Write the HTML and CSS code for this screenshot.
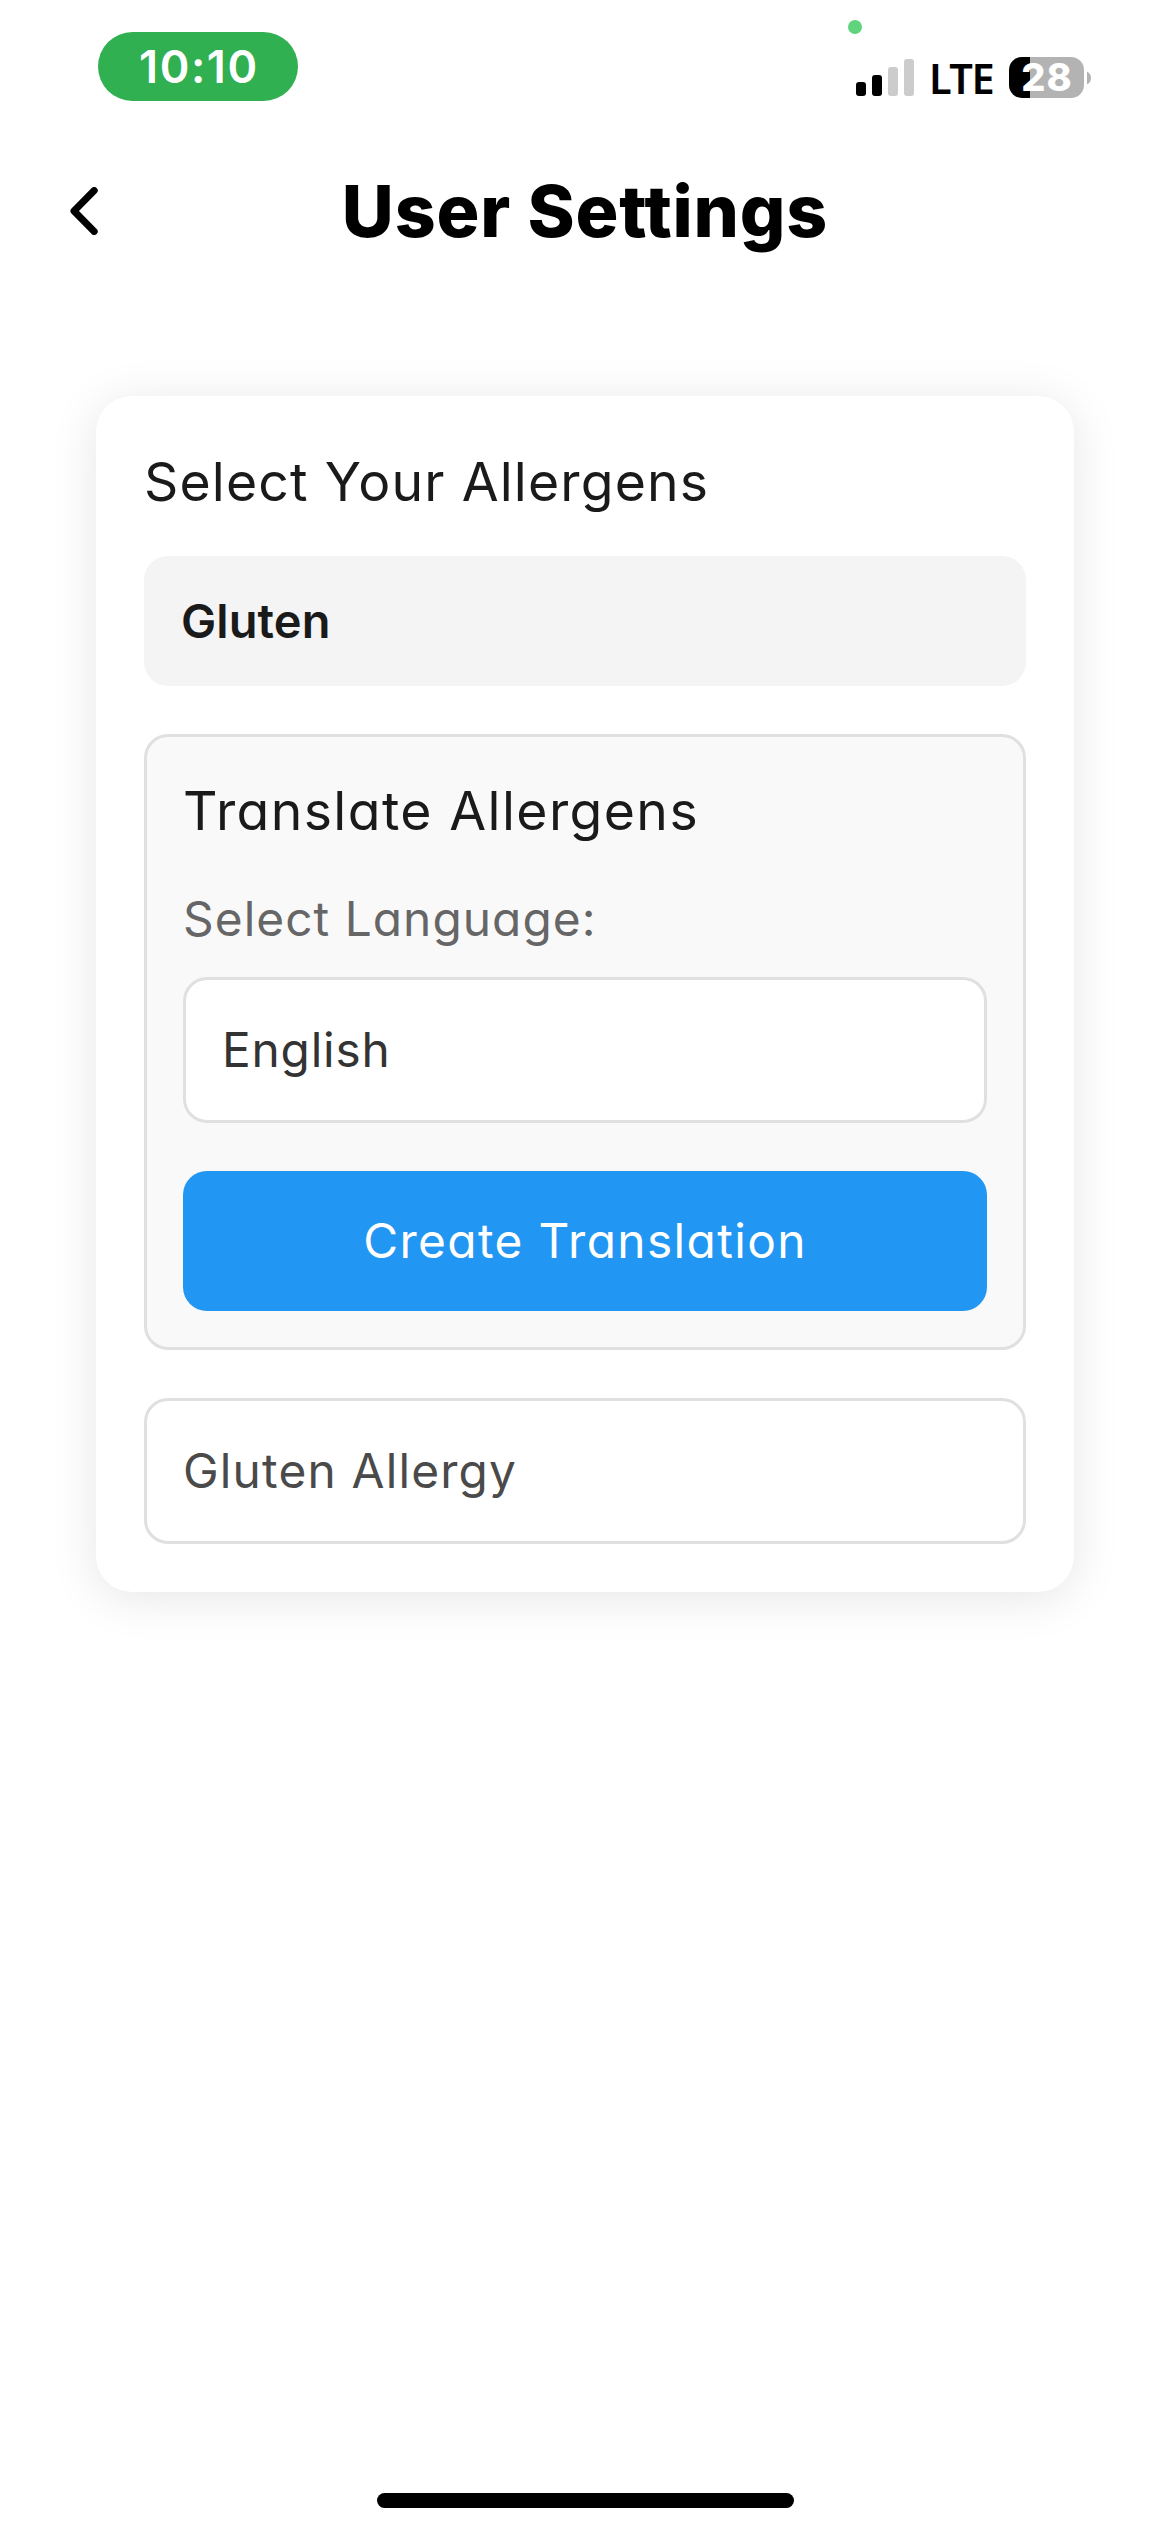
FILE: index.html
```html
<!DOCTYPE html>
<html lang="en">
<head>
<meta charset="utf-8">
<title>User Settings</title>
<link rel="stylesheet" href="styles.css">
</head>
<body>
<div class="screen">
  <div class="status-bar">
    <div class="time-pill">10:10</div>
    <div class="indicators">
      <span class="camera-dot"></span>
      <svg class="signal" width="58" height="37" viewBox="0 0 58 37">
        <rect x="0" y="23" width="10" height="14" rx="3"/>
        <rect x="16" y="16" width="10" height="21" rx="3"/>
        <rect x="32" y="8" width="10" height="29" rx="3" fill="#ccc"/>
        <rect x="48" y="0" width="10" height="37" rx="3" fill="#ccc"/>
      </svg>
      <span class="network">LTE</span>
      <div class="battery"><span class="battery-level">28</span></div>
      <svg class="battery-nub" width="4" height="14" viewBox="0 0 4 14"><path d="M0 0.5Q4 2.5 4 7T0 13.500Z" fill="#b3b3b3"/></svg>
    </div>
  </div>

  <header class="nav">
    <button class="back" aria-label="Back">
      <svg width="28" height="48" viewBox="0 0 28 48" fill="none" stroke="#000" stroke-width="7" stroke-linecap="round" stroke-linejoin="round"><path d="M24.200 3.500L4 24L24.200 44.500"/></svg>
    </button>
    <h1 class="title">User Settings</h1>
  </header>

  <main class="card">
    <h2 class="heading">Select Your Allergens</h2>
    <div class="allergen">Gluten</div>
    <section class="translate">
      <h2 class="heading heading-translate">Translate Allergens</h2>
      <div class="label">Select Language:</div>
      <div class="field language">English</div>
      <button class="create">Create Translation</button>
    </section>
    <div class="field result">Gluten Allergy</div>
  </main>

  <div class="home-indicator"></div>
</div>
</body>
</html>
```
FILE: styles.css
```css
* {
  box-sizing: border-box;
}

body {
  margin: 0;
  background: #fff;
  font-family: Inter, "Liberation Sans", sans-serif;
  font-feature-settings: "cv11";
}

.screen {
  display: flex;
  flex-direction: column;
  width: 1170px;
  height: 2532px;
  padding-bottom: 24px;
}

h1,
h2 {
  margin: 0;
  font-weight: 400;
}

button {
  padding: 0;
  border: 0;
  background: none;
  font-family: inherit;
  font-feature-settings: inherit;
}

/* Status bar */
.status-bar {
  display: flex;
  justify-content: space-between;
  height: 141px;
  padding: 32px 79px 0 98px;
}

.time-pill {
  width: 200px;
  height: 69px;
  padding-left: 41px;
  border-radius: 35px;
  background: #30b050;
  color: #fff;
  font-size: 45px;
  font-weight: 600;
  line-height: 70px;
  letter-spacing: 1.600px;
}

.indicators {
  position: relative;
  display: flex;
  align-items: flex-start;
  padding-top: 25px;
}

.camera-dot {
  position: absolute;
  top: -12px;
  left: -8px;
  width: 14px;
  height: 14px;
  border-radius: 50%;
  background: #5fd47c;
}

.signal {
  margin-top: 2px;
}

.network {
  width: 77px;
  margin-left: 15px;
  margin-right: 3px;
  font-family: "Noto Sans", "Open Sans", sans-serif;
  font-size: 41.500px;
  font-weight: 600;
  line-height: 43px;
  letter-spacing: -1.500px;
}

.battery {
  width: 75px;
  height: 41px;
  border-radius: 13px;
  background: linear-gradient(90deg, #000 21px, #b3b3b3 21px);
  color: #fff;
  text-align: center;
}

.battery-level {
  display: block;
  padding-left: 1px;
  font-size: 38px;
  font-weight: 800;
  line-height: 41px;
  letter-spacing: 1px;
}

.battery-nub {
  margin: 14px 0 0 3px;
}

/* Navigation header */
.nav {
  display: grid;
  grid-template-columns: 100px 1fr 100px;
  align-items: center;
  height: 140px;
}

.back {
  display: flex;
  padding-left: 70px;
}

.title {
  font-size: 71.500px;
  font-weight: 800;
  line-height: 140px;
  letter-spacing: 0.800px;
  text-align: center;
}

/* Settings card */
.card {
  margin: 115px 96px 0;
  padding: 48px;
  border-radius: 36px;
  background: #fff;
  box-shadow: 0 6px 48px rgba(0, 0, 0, 0.1);
}

.heading {
  color: #1a1a1a;
  font-size: 53.500px;
  line-height: 76px;
  letter-spacing: 1.150px;
}

.heading-translate {
  letter-spacing: 1.400px;
}

.allergen {
  margin-top: 36px;
  padding-left: 37px;
  border-radius: 24px;
  background: #f4f4f4;
  color: #1a1a1a;
  font-size: 47px;
  font-weight: 600;
  line-height: 130px;
  letter-spacing: 0.100px;
}

.translate {
  margin: 48px 0;
  padding: 36px;
  border: 3px solid #e0e0e0;
  border-radius: 24px;
  background: #f9f9f9;
}

.label {
  margin: 36px 0 24px;
  color: #666;
  font-size: 47.800px;
  line-height: 68px;
  letter-spacing: 1.050px;
}

.field {
  height: 146px;
  padding-left: 36px;
  border: 3px solid #e0e0e0;
  border-radius: 24px;
  background: #fff;
  font-size: 47.800px;
  line-height: 140px;
}

.language {
  color: #333;
  letter-spacing: 0.800px;
}

.create {
  display: block;
  width: 100%;
  height: 140px;
  margin-top: 48px;
  border-radius: 24px;
  background: #2196f3;
  color: #fff;
  font-size: 47.800px;
  line-height: 140px;
  letter-spacing: 1.380px;
}

.result {
  color: #4a4a4a;
  letter-spacing: 1.180px;
}

.home-indicator {
  align-self: center;
  width: 417px;
  height: 15px;
  margin-top: auto;
  border-radius: 8px;
  background: #000;
}
```
